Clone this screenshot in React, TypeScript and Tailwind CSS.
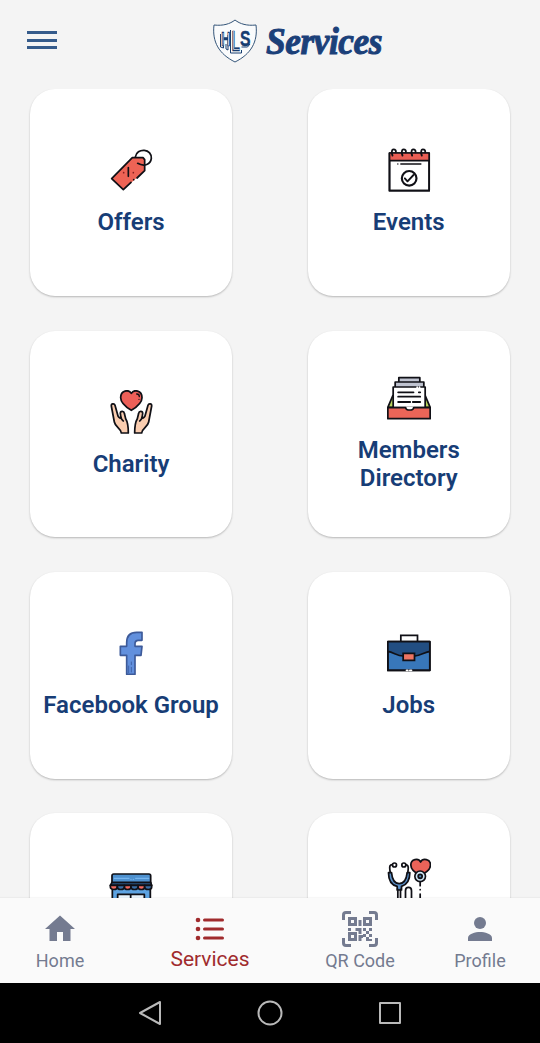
import type { ReactNode } from "react";

const OUTLINE = "#101016";

function Glyph({ box, children }: { box: string; children: ReactNode }) {
  return (
    <svg
      className="block size-11 shrink-0"
      viewBox={box}
      fill="none"
      stroke={OUTLINE}
      strokeWidth="5.2"
      strokeLinejoin="round"
      strokeLinecap="round"
    >
      {children}
    </svg>
  );
}

const OffersIcon = () => (
  <Glyph box="28 25 132 132">
    <path d="M36 117 98 54h32l5 6v33L71 150Z" fill="#ee6355" stroke="none" />
    <path d="M94 128 71 150 36 117 98 54h32l5 6v33l-23 22" />
    <path d="M102 120h0" strokeWidth="5" />
    <path d="M107 52c2-14 14-21 27-20 13 1 22 11 21 24-2 18-21 26-41 15" />
    <path d="M86 84v26" strokeWidth="5" />
    <path d="M72 99h0M101 99h0" stroke="#861f20" strokeWidth="5" />
  </Glyph>
);

const EventsIcon = () => (
  <Glyph box="32.5 25 132 132">
    <path d="M40 40h119v113H40z" fill="#fff" />
    <path d="M40 40h119v23H40z" fill="#e95e54" stroke="none" />
    <path d="M40 40h119v113H40zM40 63h119" />
    <path d="M49 48c-3-8-3-19 3-19s8 5 7 9M79 48c-3-8-3-19 3-19s8 5 7 9M108 48c-3-8-3-19 3-19s8 5 7 9M137 48c-3-8-3-19 3-19s8 5 7 9" strokeWidth="5.5" />
    <path d="M65 73h0M74 73h60" strokeWidth="4.5" />
    <circle cx="99" cy="116" r="22" strokeWidth="6.5" />
    <path d="m86 116 8 9 18-19" strokeWidth="5.5" />
  </Glyph>
);

const CharityIcon = () => (
  <Glyph box="28 30 132 132">
    <path d="M95 91C79 81 63 70 63 53c0-22 24-26 32-13 8-13 32-9 32 13 0 17-16 28-32 38Z" fill="#ec5f58" />
    <path d="M111 42c6 0 8 4 8 8M118 58h0" strokeWidth="4" />
    <path
      d="M65 159c0-13-18-17-21-33l-9-48c-1-8 9-9 11-2l9 32c3 5 7 8 9 6l-2-14c0-9 11-7 12 0l4 16c7 11 8 23 8 43Z"
      fill="#facdb0"
    />
    <path
      d="M126 159c0-13 18-17 21-33l9-48c1-8-9-9-11-2l-9 32c-3 5-7 8-9 6l2-14c0-9-11-7-12 0l-4 16c-7 11-8 23-8 43Z"
      fill="#facdb0"
    />
    <path d="M64 112c1 6 4 8 7 11M127 112c-1 6-4 8-7 11" />
  </Glyph>
);

const DirectoryIcon = () => (
  <Glyph box="31.5 24 132 132">
    <path d="M49 83 34 118h127l-15-35" fill="#b9d45b" />
    <path d="M67 29h63v20H67z" fill="#bfc3d0" />
    <path d="M56 42h86v30H56z" fill="#bfc3d0" />
    <path d="M50 57h96v62H50z" fill="#fff" />
    <path d="M65 73h46M127 73h4M65 86h66M65 102h36M109 102h22" strokeWidth="5.5" />
    <path d="M122 57v4M129 57v4" stroke="#fff" />
    <path d="M34 119h53c3 9 22 9 25 0h49v33H34Z" fill="#eb6558" />
    <path d="M90 117h19v2c-2 6-17 6-19 0Z" fill="#fff" stroke="none" />
  </Glyph>
);

const FacebookIcon = () => (
  <Glyph box="27 27 132 132">
    <path
      d="M80 157V100H61V73h19V62c0-20 11-31 30-31h16v24h-11c-8 0-10 3-10 10v8h21l-3 27h-18v57Z"
      fill="#6290dd"
      stroke="#3d5a99"
      strokeWidth="5"
    />
    <path d="M86 132v20M94 120v8M94 136v14" stroke="#3f63aa" strokeWidth="3" />
  </Glyph>
);

const JobsIcon = () => (
  <Glyph box="32.5 27 132 132">
    <path d="M74 58V40h50v18" strokeLinejoin="miter" />
    <path d="M35 59h126v86H35z" fill="#3877ba" />
    <path d="M35 59h126v29c-13 2-30 13-45 13H81c-18 0-28-11-46-14Z" fill="#224e82" stroke="none" />
    <path d="M35 59h126v86H35zM35 88c18 3 28 14 46 14M116 102c17-1 30-12 45-14" />
    <path d="M81 94h34v21H81z" fill="#ee7462" strokeLinejoin="miter" />
    <path d="M91 145h4M101 145h5" stroke="#fff" />
  </Glyph>
);

const StoreIcon = () => (
  <Glyph box="28 66 132 132">
    <path d="M38 112h114v80H38z" fill="#5da3e2" />
    <path d="M42 72h106c4 0 5 2 5 5v22H37V77c0-3 1-5 5-5Z" fill="#4e91cf" />
    <path d="M44 85h44M94 88h0M101 88h0M108 85h39" stroke="#76b5ef" strokeWidth="4" />
    <path d="M37 97h116l3 9H32Z" fill="#285582" />
    <path d="M32 106h21v5c0 10-21 10-21 0ZM74 106h20v5c0 10-20 10-20 0ZM115 106h20v5c0 10-20 10-20 0Z" fill="#f0695e" />
    <path d="M53 106h21v5c0 10-21 10-21 0ZM94 106h21v5c0 10-21 10-21 0ZM135 106h21v5c0 10-21 10-21 0Z" fill="#386da5" />
    <path d="M54 133h80v59H54zM93 133v59" fill="#eaf4fc" />
  </Glyph>
);

const MedicalIcon = () => (
  <Glyph box="31.5 24 132 132">
    <path d="M132 76c-20-9-29-18-29-31 0-18 23-22 29-9 7-13 30-9 30 9 0 13-10 22-30 31Z" fill="#eb6359" />
    <path d="M49 44c-10-1-10 6-9 15l2 15M85 44c10-1 11 6 10 15l-2 15" />
    <circle cx="54" cy="45" r="6" fill="#fff" />
    <circle cx="82" cy="45" r="6" fill="#fff" />
    <path
      d="M36 68h9c2 20 7 33 23 33s22-13 24-33h8c0 22-9 36-25 41v11H62v-11C45 105 36 90 36 68Z"
      fill="#5b91ca"
    />
    <path d="M64 118v40M72 118v40M87 158v-36c0-13 18-13 18 0v36" />
    <circle cx="131" cy="79" r="16" fill="#cfe5f4" strokeWidth="5" />
    <circle cx="131" cy="79" r="6" fill="#4c86b4" />
    <path d="M131 97v10M131 119h0M131 132v24" />
  </Glyph>
);

const services: { label: string; icon: ReactNode }[] = [
  { label: "Offers", icon: <OffersIcon /> },
  { label: "Events", icon: <EventsIcon /> },
  { label: "Charity", icon: <CharityIcon /> },
  { label: "Members Directory", icon: <DirectoryIcon /> },
  { label: "Facebook Group", icon: <FacebookIcon /> },
  { label: "Jobs", icon: <JobsIcon /> },
];

function ServiceCard({ label, icon }: { label: string; icon: ReactNode }) {
  return (
    <button className="flex h-[206.5px] flex-col items-center justify-center gap-4 rounded-[25px] bg-white px-2 shadow-[0_1px_2px_rgba(0,0,0,0.25)]">
      {icon}
      <span className="text-center text-[24px] leading-7 font-semibold text-[#173d76]">{label}</span>
    </button>
  );
}

function Crest() {
  return (
    <svg className="block h-11 w-[46px]" viewBox="0 0 46 44" fill="none">
      <path
        d="M23 1C18 5 11 7 2 6c-2 17 5 29 21 37C39 35 46 23 44 6 35 7 28 5 23 1Z"
        fill="#fafbfc"
        stroke="#345579"
        strokeWidth="1"
      />
      <path d="M8.500 15v13l3 1v-5M14 25v5l2 1V16M18.500 11v23h11v-3M29.500 28h6l2.500-3" stroke="#173d70" strokeWidth="1" />
      <g fill="#173d70" stroke="#173d70" strokeWidth="0.4" fontFamily="Liberation Sans, sans-serif" fontWeight="700">
        <text x="9" y="27" fontSize="20" textLength="9.500" lengthAdjust="spacingAndGlyphs">H</text>
        <text x="19.500" y="32" fontSize="29" textLength="8.500" lengthAdjust="spacingAndGlyphs">L</text>
        <text x="28" y="27" fontSize="22" textLength="10.500" lengthAdjust="spacingAndGlyphs">S</text>
      </g>
      <path d="M11 14v12.500M16.500 14v12.500M21.700 12v18.500h6" stroke="#fff" strokeWidth="0.7" />
    </svg>
  );
}

function Header() {
  return (
    <header className="grid h-[89px] shrink-0 grid-cols-[212px_1fr] items-start">
      <button aria-label="Menu" className="mt-[31px] ml-[27px] flex w-[30px] flex-col gap-[4.5px]">
        <span className="h-[3px] bg-[#355b8b]" />
        <span className="h-[3px] bg-[#355b8b]" />
        <span className="h-[3px] bg-[#355b8b]" />
      </button>
      <div className="mt-[18px] flex items-center gap-2">
        <Crest />
        <h1 className="origin-left scale-x-[0.93] font-['Liberation_Serif',serif] text-[38px] leading-[46px] font-bold tracking-[-0.5px] text-[#1b4079] italic [-webkit-text-stroke:1px_#1b4079]">
          Services
        </h1>
      </div>
    </header>
  );
}

function HomeIcon() {
  return (
    <svg className="block h-9 w-9" viewBox="0 0 24 24" fill="currentColor">
      <path d="M10 20v-6h4v6h5v-8h3L12 3 2 12h3v8z" />
    </svg>
  );
}

function ListIcon() {
  return (
    <svg className="block h-9 w-9" viewBox="0 0 36 36" fill="none" stroke="currentColor" strokeWidth="3" strokeLinecap="round">
      <path d="M12.500 9H30.500M12.500 18H30.500M12.500 27H30.500" />
      <g fill="currentColor" stroke="none">
        <circle cx="6" cy="9" r="2.300" />
        <circle cx="6" cy="18" r="2.300" />
        <circle cx="6" cy="27" r="2.300" />
      </g>
    </svg>
  );
}

function QrIcon() {
  return (
    <svg className="block h-9 w-9" viewBox="0 0 36 36" fill="none" stroke="currentColor" strokeWidth="3">
      <path d="M1.500 9V4q0-2.500 2.500-2.500H9M27 1.500h5q2.500 0 2.500 2.500V9M1.500 27v5q0 2.500 2.500 2.500H9M27 34.500h5q2.500 0 2.500-2.500v-5" />
      <path d="M7.500 7.500h6v6h-6zM22.500 7.500h6v6h-6zM7.500 22.500h6v6h-6z" />
      <path
        d="M16.500 9h3v6h-3zM6 17h3v3H6zM13.500 17h6v3h-6zM16.500 20h3v3h-3zM21 17h3v3h-3zM27 17h3v3h-3zM24 20h3v3h-3zM21 23h3v3h-3zM27 23h3v3h-3zM16.500 24h4.500v3h-1.500v3h-3zM24 26h3v4h-3zM27 28h3v2h-3z"
        fill="currentColor"
        stroke="none"
      />
    </svg>
  );
}

function PersonIcon() {
  return (
    <svg className="block h-9 w-9" viewBox="0 0 24 24" fill="currentColor">
      <circle cx="12" cy="8" r="4" />
      <path d="M4 20v-2c0-2.700 5-4 8-4s8 1.300 8 4v2z" />
    </svg>
  );
}

function NavItem({ label, icon, active = false }: { label: string; icon: ReactNode; active?: boolean }) {
  return (
    <button
      className={
        active
          ? "flex w-[180px] flex-col items-center pt-[13px] text-[#a02b2d]"
          : "flex w-[120px] flex-col items-center pt-[13px] text-[#747b90]"
      }
    >
      {icon}
      <span className={active ? "text-[21px] leading-6" : "mt-[2px] text-[18px] leading-6"}>{label}</span>
    </button>
  );
}

export default function App() {
  return (
    <div className="flex h-[1043px] w-[540px] flex-col overflow-hidden bg-[#f4f4f4] font-[Roboto,sans-serif]">
      <Header />
      <main className="min-h-0 flex-1 overflow-hidden">
        <div className="grid grid-cols-[202.5px_202.5px] justify-between gap-y-[35px] pr-[30px] pl-[29.8px]">
          {services.map((service) => (
            <ServiceCard key={service.label} {...service} />
          ))}
          <div className="-mt-px flex h-[206.5px] justify-center rounded-[25px] bg-white pt-[59.5px] shadow-[0_1px_2px_rgba(0,0,0,0.25)]">
            <StoreIcon />
          </div>
          <div className="-mt-px flex h-[206.5px] justify-center rounded-[25px] bg-white pt-[45.5px] shadow-[0_1px_2px_rgba(0,0,0,0.25)]">
            <MedicalIcon />
          </div>
        </div>
      </main>
      <nav className="flex h-[85px] shrink-0 items-start bg-[#fafafa] shadow-[0_-1px_1px_rgba(0,0,0,0.03)]">
        <NavItem label="Home" icon={<HomeIcon />} />
        <NavItem label="Services" icon={<ListIcon />} active />
        <NavItem label="QR Code" icon={<QrIcon />} />
        <NavItem label="Profile" icon={<PersonIcon />} />
      </nav>
      <footer className="flex h-[60px] shrink-0 items-center justify-center gap-[92px] bg-black text-[#b9b9b9]">
        <svg className="size-7" viewBox="0 0 28 28" fill="none" stroke="currentColor" strokeWidth="2" strokeLinejoin="round">
          <path d="M24 3v22L4 14Z" />
        </svg>
        <svg className="size-7" viewBox="0 0 28 28" fill="none" stroke="currentColor" strokeWidth="2">
          <circle cx="14" cy="14" r="11.500" />
        </svg>
        <svg className="size-7" viewBox="0 0 28 28" fill="none" stroke="currentColor" strokeWidth="2" strokeLinejoin="round">
          <path d="M4 4h20v20H4z" />
        </svg>
      </footer>
    </div>
  );
}
